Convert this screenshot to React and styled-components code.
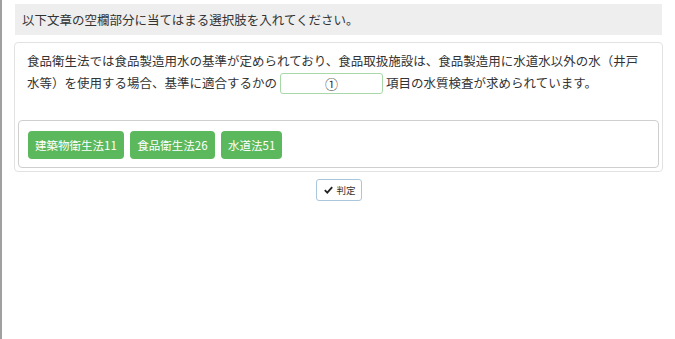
import React from "react";
import styled, { createGlobalStyle } from "styled-components";

const Global = createGlobalStyle`
  html, body { margin: 0; padding: 0; background: #fff; }
  body {
    font-family: "Noto Sans CJK JP", "Noto Sans", sans-serif;
    color: #333;
  }
`;

const Page = styled.div`
  box-sizing: border-box;
  min-height: 100vh;
  border-left: 2px solid #a0a0a0;
  padding: 4px 12px 0 12px;
`;

const Instruction = styled.div`
  margin: 0 1px 7px 1px;
  height: 31px;
  line-height: 31px;
  padding-left: 7px;
  background: #eeeeee;
  font-size: 12.5px;
  color: #333;
`;

const Card = styled.div`
  border: 1px solid #e2e2e2;
  border-radius: 4px;
  padding: 0 3px 3px;
  background: #fff;
`;

const Question = styled.p`
  margin: 0 0 26px;
  padding: 7px 9px 0;
  font-size: 12.5px;
  line-height: 22px;
  color: #333;
`;

const Blank = styled.span`
  display: inline-block;
  box-sizing: border-box;
  width: 103px;
  height: 21px;
  line-height: 19px;
  margin: 1px 3px 0 3px;
  vertical-align: top;
  border: 1px solid #a8d8a8;
  border-radius: 3px;
  text-align: center;
  font-size: 13px;
`;

const Options = styled.div`
  display: flex;
  gap: 6.5px;
  border: 1px solid #cfcfcf;
  border-radius: 4px;
  padding: 10px 9px 8px;
`;

const Choice = styled.button`
  height: 28px;
  padding: 0 7px;
  border: none;
  border-radius: 4px;
  background: #5cb85c;
  color: #fff;
  font-family: inherit;
  font-size: 11.5px;
  cursor: pointer;
`;

const Actions = styled.div`
  display: flex;
  justify-content: center;
  margin-top: 7px;
`;

const JudgeButton = styled.button`
  display: flex;
  align-items: center;
  gap: 4px;
  box-sizing: border-box;
  width: 46px;
  height: 22px;
  padding: 0 0 0 7px;
  border: 1px solid #a9c6dc;
  border-radius: 3px;
  background: #fff;
  color: #333;
  font-family: inherit;
  font-size: 9.5px;
  cursor: pointer;
`;

const Check = () => (
  <svg width="9" height="8" viewBox="0 0 9 8">
    <path d="M0.8 4.2 L3.3 6.6 L8.2 1.2" fill="none" stroke="#222" strokeWidth="1.8" />
  </svg>
);

const choices = ["建築物衛生法11", "食品衛生法26", "水道法51"];

export default function App() {
  return (
    <>
      <Global />
      <Page>
        <Instruction>以下文章の空欄部分に当てはまる選択肢を入れてください。</Instruction>
        <Card>
          <Question>
            食品衛生法では食品製造用水の基準が定められており、食品取扱施設は、食品製造用に水道水以外の水（井戸水等）を使用する場合、基準に適合するかの
            <Blank>①</Blank>
            項目の水質検査が求められています。
          </Question>
          <Options>
            {choices.map((c) => (
              <Choice key={c}>{c}</Choice>
            ))}
          </Options>
        </Card>
        <Actions>
          <JudgeButton>
            <Check />
            判定
          </JudgeButton>
        </Actions>
      </Page>
    </>
  );
}
